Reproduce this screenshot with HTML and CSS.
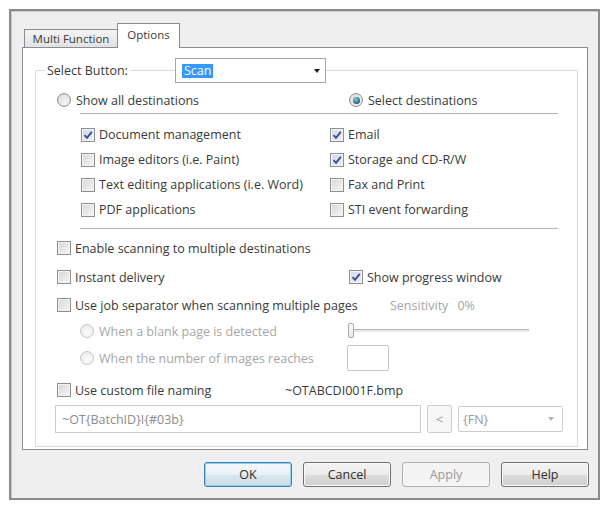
FILE: index.html
```html
<!DOCTYPE html>
<html>
<head>
<meta charset="utf-8">
<title>Options</title>
<link rel="stylesheet" href="styles.css">
</head>
<body>
<div class="dialog">
  <div class="tabs">
    <div class="tab">Multi Function</div>
    <div class="tab tab-active">Options</div>
  </div>

  <div class="panel">
    <div class="group">
      <div class="group-head">
        <span class="caption">Select Button:</span>
        <div class="combo combo-main">
          <span class="combo-sel">Scan</span>
          <span class="arrow"></span>
        </div>
      </div>

      <div class="row cols-a row-radios">
        <div class="opt"><span class="radio"></span>Show all destinations</div>
        <div class="opt"><span class="radio on"></span>Select destinations</div>
      </div>

      <div class="sep sep-a"></div>

      <div class="dest-grid">
        <div class="opt"><span class="check on"><svg viewBox="0 0 12 12"><path d="M2.5 6.2 L5 8.8 L9.8 2.8"/></svg></span>Document management</div>
        <div class="opt"><span class="check on"><svg viewBox="0 0 12 12"><path d="M2.5 6.2 L5 8.8 L9.8 2.8"/></svg></span>Email</div>
        <div class="opt"><span class="check"></span>Image editors (i.e. Paint)</div>
        <div class="opt"><span class="check on"><svg viewBox="0 0 12 12"><path d="M2.5 6.2 L5 8.8 L9.8 2.8"/></svg></span>Storage and CD-R/W</div>
        <div class="opt"><span class="check"></span>Text editing applications (i.e. Word)</div>
        <div class="opt"><span class="check"></span>Fax and Print</div>
        <div class="opt"><span class="check"></span>PDF applications</div>
        <div class="opt"><span class="check"></span>STI event forwarding</div>
      </div>

      <div class="sep sep-b"></div>

      <div class="row row-enable">
        <div class="opt"><span class="check"></span>Enable scanning to multiple destinations</div>
      </div>

      <div class="row cols-a row-instant">
        <div class="opt"><span class="check"></span>Instant delivery</div>
        <div class="opt"><span class="check on"><svg viewBox="0 0 12 12"><path d="M2.5 6.2 L5 8.8 L9.8 2.8"/></svg></span>Show progress window</div>
      </div>

      <div class="row cols-b row-job">
        <div class="opt"><span class="check"></span>Use job separator when scanning multiple pages</div>
        <div class="sens"><span>Sensitivity</span><span>0%</span></div>
      </div>

      <div class="row cols-c row-blank">
        <div class="opt dis"><span class="radio dis"></span>When a blank page is detected</div>
        <div class="slider">
          <span class="track"></span>
          <span class="thumb"></span>
        </div>
      </div>

      <div class="row cols-d row-count">
        <div class="opt dis"><span class="radio dis"></span>When the number of images reaches</div>
        <div class="count-box"></div>
      </div>

      <div class="row cols-e row-naming">
        <div class="opt"><span class="check"></span>Use custom file naming</div>
        <div class="sample">~OTABCDI001F.bmp</div>
      </div>

      <div class="row row-pattern">
        <div class="field">~OT{BatchID}I{#03b}</div>
        <div class="small-btn">&lt;</div>
        <div class="combo combo-fn">
          <span>{FN}</span>
          <span class="arrow"></span>
        </div>
      </div>
    </div>
  </div>

  <div class="buttons">
    <div class="btn btn-default">OK</div>
    <div class="btn">Cancel</div>
    <div class="btn btn-disabled">Apply</div>
    <div class="btn">Help</div>
  </div>
</div>
</body>
</html>
```

FILE: styles.css
```css
* {
  box-sizing: border-box;
}

body {
  margin: 0;
  background: #ffffff;
  font-family: "Open Sans", "Noto Sans", sans-serif;
  font-size: 12.5px;
  color: #3a3a3a;
}

/* dialog frame */
.dialog {
  width: 591px;
  margin: 9px 0 0 9px;
  padding: 12px 9px 11px 11px;
  border: 2px solid #8c8c8c;
  box-shadow: inset 1px 1px 0 #c9c9c9;
  background: #efefef;
}

/* tab strip */
.tabs {
  display: flex;
  align-items: flex-end;
  height: 25px;
  padding-left: 2px;
}

.tab {
  display: flex;
  align-items: center;
  justify-content: center;
  width: 94px;
  height: 18px;
  margin-bottom: 1px;
  border: 1px solid #898c95;
  border-bottom: none;
  background: linear-gradient(#f4f4f4, #e2e2e2);
  color: #3a3a3a;
  font-size: 11.5px;
}

.tab-active {
  position: relative;
  width: 63px;
  height: 25px;
  margin-bottom: 0;
  margin-left: -1px;
  padding-bottom: 3px;
  background: #ffffff;
}

/* tab page */
.panel {
  margin: -1px 1px 0 0;
  padding: 22px 9px 2px 12px;
  border: 1px solid #898c95;
  background: #ffffff;
}

.group {
  border: 1px solid #d5dde3;
  padding-bottom: 13px;
}

.group-head {
  display: flex;
  align-items: center;
  height: 25px;
  margin-top: -13px;
  padding-left: 9px;
}

.caption {
  width: 85px;
  padding: 0 2px;
  background: #ffffff;
}

/* drop-down boxes */
.combo {
  display: flex;
  align-items: center;
  background: #ffffff;
  border: 1px solid #abadb3;
}

.combo-main {
  width: 151px;
  height: 25px;
  margin-left: 45px;
  padding-left: 6px;
  border-color: #a3a5ab;
}

.combo-sel {
  padding: 0 2px;
  line-height: 14px;
  background: #3399ff;
  color: #ffffff;
}

.arrow {
  margin-left: auto;
  margin-right: 5px;
  width: 0;
  height: 0;
  border-left: 3.5px solid transparent;
  border-right: 3.5px solid transparent;
  border-top: 4px solid #1e1e1e;
}

/* rows */
.row {
  display: grid;
  align-items: center;
  height: 20px;
  padding-left: 21px;
}

.cols-a { grid-template-columns: 292px auto; }
.cols-b { grid-template-columns: 333px auto; }
.cols-c { grid-template-columns: 268px auto; padding-left: 44px; }
.cols-d { grid-template-columns: 267px auto; padding-left: 44px; }
.cols-e { grid-template-columns: 228px auto; }

.row-radios { margin-top: 7px; }
.row-enable { margin-top: 9px; }
.row-instant { margin-top: 9px; }
.row-job { margin-top: 8px; }
.row-blank { margin-top: 6px; }
.row-count { margin-top: 4px; height: 26px; }
.row-naming { margin-top: 9px; }

.row-pattern {
  display: flex;
  align-items: center;
  height: 28px;
  margin-top: 5px;
  padding-left: 19px;
}

.opt {
  display: flex;
  align-items: center;
  white-space: nowrap;
}

.opt.dis {
  color: #a6a6a6;
}

/* separators */
.sep {
  height: 1px;
  margin: 0 19px 0 44px;
  background: #b4b4b4;
}

.sep-a { margin-top: 3px; }
.sep-b { margin-top: 6px; }

/* destination checkboxes */
.dest-grid {
  display: grid;
  grid-template-columns: 249px auto;
  grid-auto-rows: 25px;
  align-items: center;
  margin-top: 8px;
  padding-left: 45px;
}

/* check boxes */
.check {
  display: flex;
  align-items: center;
  justify-content: center;
  flex: none;
  width: 14px;
  height: 14px;
  margin-right: 4px;
  border: 1px solid #8e8f8f;
  box-shadow: inset 0 0 0 1px #f4f4f4;
  background: linear-gradient(135deg, #d6d6d6, #f6f6f6);
}

.check.on {
  background: linear-gradient(135deg, #d3d7ec, #eef0f8);
}

.check svg {
  width: 12px;
  height: 12px;
}

.check path {
  fill: none;
  stroke: #3b4f8c;
  stroke-width: 1.9;
}

/* radio buttons */
.radio {
  display: flex;
  align-items: center;
  justify-content: center;
  flex: none;
  width: 14px;
  height: 14px;
  margin-right: 5px;
  border: 1px solid #8e8f8f;
  border-radius: 50%;
  background: radial-gradient(circle at 60% 65%, #f6f6f6, #d4d4d4);
}

.radio.on::after {
  content: "";
  width: 7px;
  height: 7px;
  border-radius: 50%;
  background: radial-gradient(circle at 40% 35%, #8fd0e0, #1c5f76 70%);
}

.radio.dis {
  border-color: #c6c6c6;
  background: radial-gradient(circle at 60% 65%, #fbfbfb, #e6e6e6);
}

/* sensitivity slider */
.sens {
  display: flex;
  gap: 9px;
  color: #a6a6a6;
}

.slider {
  position: relative;
  width: 181px;
  height: 16px;
}

.track {
  position: absolute;
  left: 0;
  right: 0;
  top: 6px;
  height: 3px;
  border-top: 1px solid #b2b2b2;
  border-bottom: 1px solid #e4e4e4;
  background: #ececec;
}

.thumb {
  position: absolute;
  left: 0;
  top: 0;
  width: 6px;
  height: 15px;
  border: 1px solid #a9a9a9;
  border-radius: 2px;
  background: linear-gradient(#fbfbfb, #e8e8e8);
}

.count-box {
  width: 42px;
  height: 26px;
  border: 1px solid #c6c6c6;
  border-radius: 2px;
  background: #ffffff;
}

.sample {
  color: #3a3a3a;
}

/* naming pattern */
.field {
  display: flex;
  align-items: center;
  width: 366px;
  height: 28px;
  padding-left: 6px;
  border: 1px solid #cdcdcd;
  color: #8c8c8c;
}

.small-btn {
  display: flex;
  align-items: center;
  justify-content: center;
  width: 25px;
  height: 28px;
  margin-left: 6px;
  border: 1px solid #cdcdcd;
  border-radius: 2px;
  background: #f7f7f7;
  color: #9a9a9a;
}

.combo-fn {
  width: 105px;
  height: 26px;
  margin-left: 6px;
  padding-left: 4px;
  border-color: #cdcdcd;
  border-radius: 2px;
  color: #9a9a9a;
}

.combo-fn .arrow {
  margin-right: 8px;
  border-top-color: #b4b4b4;
}

/* dialog buttons */
.buttons {
  display: flex;
  justify-content: flex-end;
  gap: 11px;
  margin-top: 12px;
}

.btn {
  display: flex;
  align-items: center;
  justify-content: center;
  width: 88px;
  height: 25px;
  border: 1px solid #707070;
  border-radius: 3px;
  box-shadow: inset 0 0 0 1px #fbfbfb;
  background: linear-gradient(#f3f3f3 0%, #ebebeb 50%, #dddddd 51%, #cfcfcf 100%);
  color: #2e2e2e;
}

.btn-default {
  border-color: #3c7fb1;
  box-shadow: inset 0 0 0 1px #8fd0f3;
  background: linear-gradient(#f3f8fb 0%, #e8f1f6 50%, #d9e6ee 51%, #cddde7 100%);
}

.btn-disabled {
  border-color: #adb2b5;
  box-shadow: none;
  background: #f4f4f4;
  color: #9a9a9a;
}
```
